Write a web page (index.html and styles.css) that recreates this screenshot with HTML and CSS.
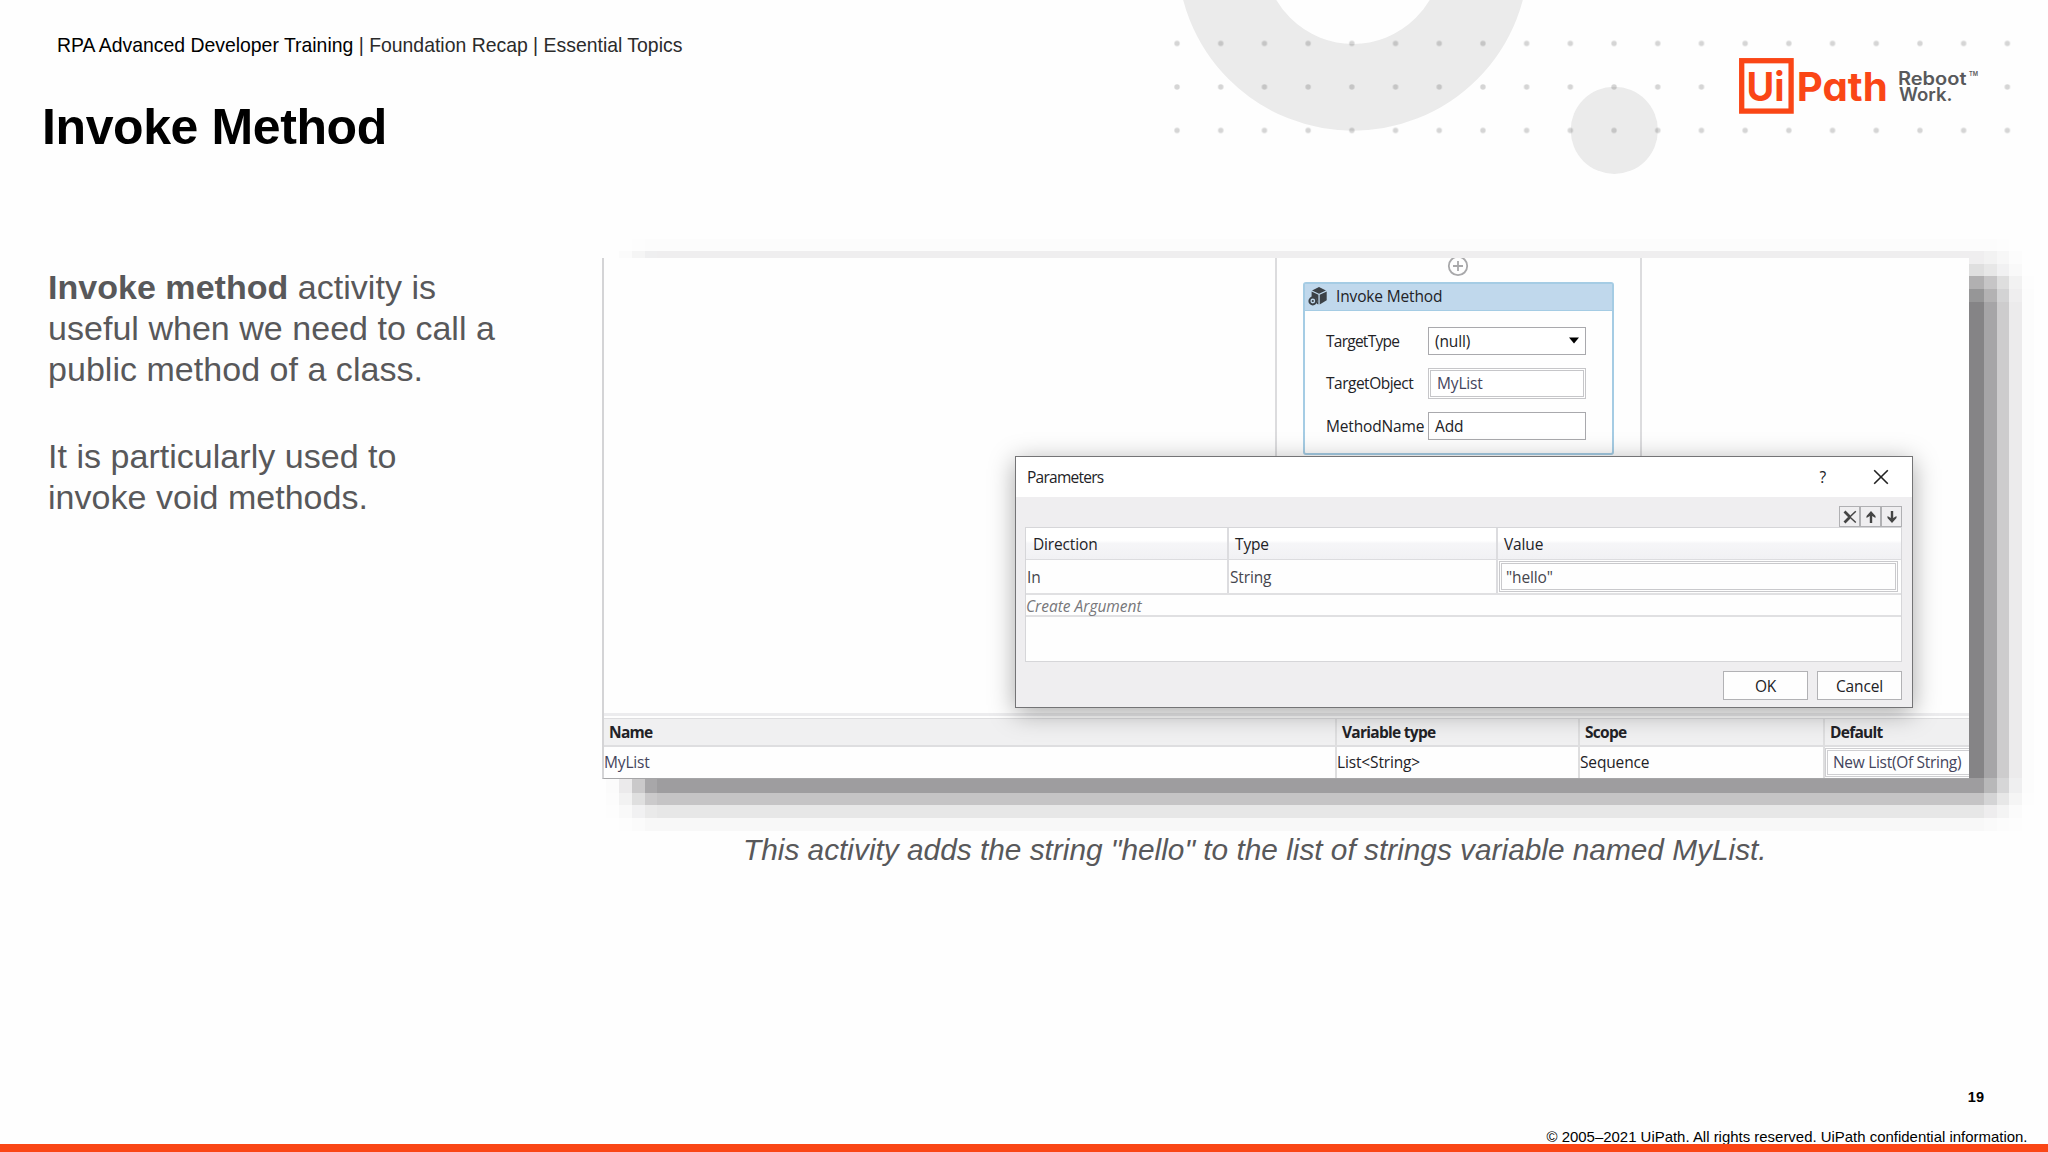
FILE: index.html
```html
<!DOCTYPE html>
<html lang="en">
<head>
<meta charset="utf-8">
<title>Invoke Method</title>
<link rel="stylesheet" href="styles.css">
</head>
<body>
<div class="slide">
  <svg class="backdrop" width="898" height="190" viewBox="1150 0 898 190" aria-hidden="true">
    <defs>
      <pattern id="dots" x="1155.2" y="21.7" width="43.7" height="43.5" patternUnits="userSpaceOnUse">
        <circle cx="21.85" cy="21.75" r="2.7" fill="#000" fill-opacity=".16"/>
      </pattern>
    </defs>
    <circle cx="1353" cy="-45" r="132.3" fill="none" stroke="#ebebeb" stroke-width="86.8"/>
    <circle cx="1614.3" cy="130.3" r="43.6" fill="#ebebeb"/>
    <rect x="1155.2" y="21.7" width="874" height="43.5" fill="url(#dots)"/>
    <rect x="1155.2" y="65.2" width="568.1" height="43.5" fill="url(#dots)"/>
    <rect x="1985.5" y="65.2" width="43.7" height="43.5" fill="url(#dots)"/>
    <rect x="1155.2" y="108.7" width="874" height="43.5" fill="url(#dots)"/>
  </svg>

  <header class="masthead">
    <div class="headings">
      <p class="breadcrumb">RPA Advanced Developer Training <span class="crumbs">| Foundation Recap | Essential Topics</span></p>
      <h1 class="title">Invoke Method</h1>
    </div>
    <svg class="logo" width="242" height="58" viewBox="1738 57 242 58" role="img" aria-label="UiPath Reboot Work">
      <rect x="1741.7" y="60.7" width="49.4" height="50.4" fill="none" stroke="#fa4616" stroke-width="5.3"/>
      <g class="brand">
        <text x="1746.6" y="101.2" textLength="38" lengthAdjust="spacingAndGlyphs">Ui</text>
        <text x="1796.7" y="101.2" textLength="91" lengthAdjust="spacingAndGlyphs">Path</text>
      </g>
      <g class="tagline">
        <text x="1898" y="85.2" textLength="68.5" lengthAdjust="spacingAndGlyphs">Reboot</text>
        <text x="1899" y="101.4" textLength="53.5" lengthAdjust="spacingAndGlyphs">Work.</text>
        <text class="tm" x="1969" y="76" textLength="9" lengthAdjust="spacingAndGlyphs">TM</text>
      </g>
    </svg>
  </header>

  <main class="content">
    <div class="notes">
      <p><strong>Invoke method</strong> activity is<br>useful when we need to call a<br>public method of a class.</p>
      <p>It is particularly used to<br>invoke void methods.</p>
    </div>

    <figure class="figure">
      <div class="shot">
        <div class="designer">
          <div class="sequence">
            <svg class="plus" width="22" height="22" viewBox="0 0 22 22"><circle cx="11" cy="11" r="9.2"/><path d="M11 6v10M6 11h10"/></svg>
            <section class="activity">
              <h2 class="activity-head">
                <svg width="20" height="19" viewBox="0 0 20 19">
                  <path fill="#3c4146" d="M11 0l7 3.4-7 3.3-7-3.3zM3.6 4.6l6.8 3.2v9.8l-1.6-.8a4.6 4.6 0 0 0-5.2-6.6zM11.7 7.8l7-3.2v8.6l-7 4.2z"/>
                  <circle cx="4.8" cy="14" r="3.4" fill="none" stroke="#3c4146" stroke-width="2"/><circle cx="4.8" cy="14" r="1.1" fill="#3c4146"/>
                </svg>
                <span>Invoke Method</span>
              </h2>
              <div class="fields">
                <span class="tight">TargetType</span>
                <div class="box select">(null)<svg width="10" height="7" viewBox="0 0 10 7"><path d="M0 .5h10L5 6.5z"/></svg></div>
                <span class="snug">TargetObject</span>
                <div class="box expr">MyList</div>
                <span>MethodName</span>
                <div class="box">Add</div>
              </div>
            </section>
          </div>
        </div>
        <div class="divider"></div>
        <div class="variables">
          <div class="th">Name</div><div class="th">Variable type</div><div class="th">Scope</div><div class="th">Default</div>
          <div class="td blue">MyList</div><div class="td">List&lt;String&gt;</div><div class="td">Sequence</div><div class="td edit">New List(Of String)</div>
        </div>

        <section class="dialog">
          <div class="dialog-title">
            <span class="tight">Parameters</span>
            <span class="help">?</span>
            <svg width="16" height="16" viewBox="0 0 16 16"><path d="M1.2 1.2l13.6 13.6M14.8 1.2L1.2 14.8"/></svg>
          </div>
          <div class="tools">
            <div class="tool"><svg width="14" height="14" viewBox="0 0 14 14"><path d="M1.5 1.5L6.5 6.5M1.5 12.5L6.5 7.5" fill="none" stroke="#444" stroke-width="2.8"/><path d="M6 6.2l6.8 6.3M6 7.8l6.8-6.6" fill="none" stroke="#444" stroke-width="1.5"/></svg></div>
            <div class="tool"><svg width="14" height="14" viewBox="0 0 14 14"><path d="M7 1l4.5 5v2L8.2 6v7H5.800V6L2.500 8V6z" fill="#444"/></svg></div>
            <div class="tool"><svg width="14" height="14" viewBox="0 0 14 14"><path d="M7 13l4.5-5V6L8.2 8V1H5.800v7L2.500 6v2z" fill="#444"/></svg></div>
          </div>
          <div class="args">
            <div class="args-row args-head"><span>Direction</span><span>Type</span><span>Value</span></div>
            <div class="args-row args-data"><span>In</span><span>String</span><span class="value"><span class="value-box">"hello"</span></span></div>
            <div class="args-new">Create Argument</div>
          </div>
          <div class="actions"><div class="btn">OK</div><div class="btn">Cancel</div></div>
        </section>
      </div>
      <figcaption class="caption">This activity adds the string "hello" to the list of strings variable named MyList.</figcaption>
    </figure>
  </main>

  <footer class="footer">
    <p class="page-number">19</p>
    <p class="copyright">© 2005–2021 UiPath. All rights reserved. UiPath confidential information.</p>
  </footer>
</div>
</body>
</html>
```
FILE: styles.css
```css
* { box-sizing: border-box; }

body {
  margin: 0;
  background: #fefefe;
  font-family: "Liberation Sans", Arial, sans-serif;
  color: #000;
}

p, h1, h2, figure { margin: 0; }
svg { display: block; flex: none; }

.slide {
  position: relative;
  display: flex;
  flex-direction: column;
  width: 2048px;
  height: 1152px;
  overflow: hidden;
  border-bottom: 8px solid #fa4616;
}

.backdrop { position: absolute; top: 0; right: 0; }

/* Masthead */
.masthead {
  position: relative;
  display: flex;
  justify-content: space-between;
  height: 258px;
  padding: 33px 68px 0 42px;
}
.breadcrumb { padding-left: 15px; font-size: 19.42px; line-height: 24px; white-space: nowrap; }
.crumbs { color: #2b2b2b; }
.title { margin-top: 40px; font-size: 50px; line-height: 60px; letter-spacing: -0.4px; }
.logo { margin-top: 24px; }
.brand { font: 700 39.5px Inter, sans-serif; font-feature-settings: "cv11"; fill: #fa4616; }
.tagline { font: 600 18px Inter, sans-serif; fill: #58595b; }
.tm { font-size: 6px; }

/* Content */
.content { display: flex; flex: 1; }
.notes {
  width: 602px;
  padding: 9px 0 0 48px;
  color: #58585a;
  font-size: 34px;
  letter-spacing: 0.03px;
  line-height: 40.9px;
}
.notes p + p { margin-top: 46px; }

.figure { position: relative; width: 1367px; }

/* Stepped drop shadow: horizontal and vertical falloff multiplied together */
.figure::before {
  content: "";
  position: absolute;
  left: 4px;
  top: -19px;
  width: 1428px;
  height: 592px;
  background: rgba(8, 6, 10, .49);
  mask-image:
    linear-gradient(90deg, rgb(0 0 0 / .03) 13px, rgb(0 0 0 / .2) 13px 26px, rgb(0 0 0 / .55) 26px 39px, rgb(0 0 0 / .9) 39px 51px, #000 51px 1378px, rgb(0 0 0 / .73) 1378px 1391px, rgb(0 0 0 / .41) 1391px 1403px, rgb(0 0 0 / .15) 1403px 1416px, rgb(0 0 0 / .02) 1416px),
    linear-gradient(180deg, rgb(0 0 0 / .02) 12px, rgb(0 0 0 / .13) 12px 25px, rgb(0 0 0 / .26) 25px 37px, rgb(0 0 0 / .64) 37px 50px, rgb(0 0 0 / .86) 50px 63px, #000 63px 539px, rgb(0 0 0 / .79) 539px 554px, rgb(0 0 0 / .47) 554px 566px, rgb(0 0 0 / .19) 566px 579px, rgb(0 0 0 / .05) 579px);
  mask-composite: intersect;
}

.shot {
  position: relative;
  display: flex;
  flex-direction: column;
  height: 521px;
  overflow: hidden;
  background: #fefefe;
  border-left: 2px solid #d4d4d6;
  border-bottom: 1px solid #a5a5a7;
  font-family: "Open Sans", "Noto Sans", sans-serif;
  font-size: 15.5px;
  letter-spacing: -0.15px;
  color: #222226;
  white-space: nowrap;
}
.tight { letter-spacing: -0.75px; }
.snug { letter-spacing: -0.5px; }

.designer { flex: none; height: 455px; padding-left: 671px; }
.sequence {
  display: flex;
  flex-direction: column;
  align-items: center;
  width: 367px;
  height: 300px;
  border: solid #dcdcde;
  border-width: 0 2px;
}
.plus { margin: -3px 2px 0 0; fill: none; stroke: #a8a8aa; stroke-width: 1.8; }

.activity {
  width: 311px;
  height: 173px;
  margin-top: 5px;
  border: 2px solid #a5cce4;
  border-radius: 3px;
}
.activity-head {
  display: flex;
  align-items: center;
  gap: 8px;
  height: 27px;
  padding: 0 0 2px 3px;
  background: #c0d8ec;
  border-bottom: 1px solid #a5cce4;
  font-size: 15.5px;
  font-weight: 400;
}
.fields {
  display: grid;
  grid-template-columns: 102px 158px;
  grid-template-rows: 28px 31px 28px;
  row-gap: 13px;
  align-items: center;
  padding: 16px 0 0 21px;
}
.fields > span { margin-top: -1px; }
.box {
  display: flex;
  align-items: center;
  justify-content: space-between;
  height: 28px;
  padding: 0 6px 1px;
  background: #fff;
  border: 1.5px solid #a9a9ad;
}
.box.expr { height: 31px; padding-bottom: 1px; border: 3px double #c6c6c9; color: #44445c; }

.divider { flex: none; height: 6px; border-top: 3px solid #ececee; border-bottom: 1px solid #dedee0; }

.variables {
  display: grid;
  grid-template-columns: 733px 243px 245px 144px;
  grid-template-rows: 28px 31px;
}
.th, .td { display: flex; align-items: center; border-right: 2px solid #dededf; }
.th { padding-left: 5px; background: #f0f0f1; border-bottom: 2px solid #dedee0; font-weight: 700; letter-spacing: -0.72px; }
.td { padding: 0 0 1px; }
.blue { color: #44445c; }
.td.edit { margin: 1px 0; padding-left: 5px; border: 3px double #cfcfd2; border-right: 0; color: #44445c; letter-spacing: -0.3px; }
.th:nth-child(4) { border-right: 0; }

/* Parameters window, floating over the designer */
.dialog {
  position: absolute;
  left: 411px;
  top: 198px;
  display: flex;
  flex-direction: column;
  width: 898px;
  height: 252px;
  background: #efeef0;
  border: 1.5px solid #747476;
  box-shadow: 0 5px 24px rgb(0 0 0 / .34);
}
.dialog-title {
  display: flex;
  align-items: center;
  height: 40px;
  padding: 0 23px 0 11px;
  background: #fff;
}
.help { margin-left: auto; margin-right: 47px; }
.dialog-title path { stroke: #222; stroke-width: 1.6; }

.tools { display: flex; justify-content: flex-end; height: 30px; padding: 9px 10px 0 0; }
.tool {
  display: flex;
  align-items: center;
  justify-content: center;
  width: 21px;
  height: 21px;
  border: 1.5px solid #b0b0b3;
}

.args { height: 135px; margin: 0 10px 0 9px; background: #fefefe; border: 1.5px solid #d6d6d9; }
.args-row { display: grid; grid-template-columns: 203px 269px 1fr; }
.args-row > span { display: flex; align-items: center; border-right: 2px solid #dcdcdf; }
.args-row > span:last-child { border-right: 0; }
.args-head { height: 32px; border-bottom: 1px solid #dcdcdf; background: linear-gradient(#fff 40%, #f6f6f8 50%, #f1f1f4); }
.args-head > span { padding: 1px 0 0 6px; }
.args-head > span:first-child { padding-left: 7px; }
.args-data { height: 35px; border-bottom: 2px solid #e0e0e2; color: #45454d; }
.args-data > span { padding-left: 1px; }
.value-box {
  display: flex;
  align-items: center;
  width: 399px;
  height: 31px;
  padding-left: 4px;
  border: 3px double #c9c9cc;
}
.args-new { height: 22px; line-height: 22px; border-bottom: 2px solid #e0e0e2; font-style: italic; letter-spacing: 0; color: #77777a; }

.actions { display: flex; justify-content: flex-end; gap: 9px; padding: 9px 10px 0; }
.btn {
  width: 85px;
  height: 29px;
  border: 1.5px solid #b2b2b5;
  background: #fefefe;
  line-height: 28px;
  text-align: center;
}

.caption {
  position: relative;
  margin-top: 53px;
  padding-left: 141px;
  color: #58585a;
  font-size: 29.82px;
  font-style: italic;
  line-height: 36px;
  white-space: nowrap;
}

/* Footer */
.footer { text-align: right; }
.page-number { padding-right: 64px; font-size: 14.5px; font-weight: 700; line-height: 20px; }
.copyright { margin-top: 23px; padding-right: 20.5px; font-size: 14.94px; line-height: 14px; }
```
